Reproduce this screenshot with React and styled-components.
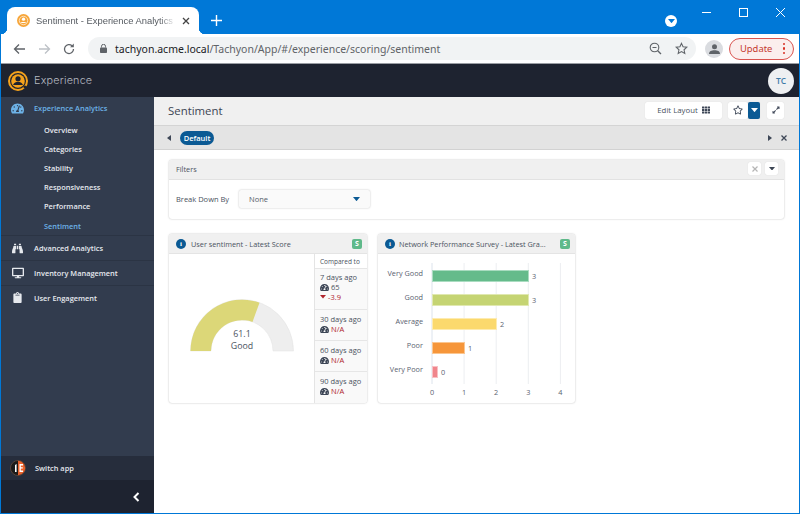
import React from 'react';
import styled, { createGlobalStyle } from 'styled-components';
import { FaTachometerAlt, FaBinoculars, FaDesktop, FaClipboard, FaTh, FaExpandAlt, FaRegStar } from 'react-icons/fa';

const Global = createGlobalStyle`
  html, body { margin: 0; padding: 0; background: #fff; }
  #root { width: 800px; height: 514px; overflow: hidden; }
  * { box-sizing: border-box; }
  body { font-family: "Open Sans", "Liberation Sans", sans-serif; }
`;

const Window = styled.div`
  width: 800px; height: 514px; display: flex; flex-direction: column;
  border: solid #0078d7; border-width: 0 1px 1px 1px; overflow: hidden; background: #fff;
`;
const TabStrip = styled.div`
  height: 34px; background: #0078d7; display: flex; align-items: flex-end; padding-left: 6px; flex: none;
`;
const Tab = styled.div`
  width: 192px; height: 27px; background: #fff; border-radius: 8px 8px 0 0; display: flex; align-items: center; position: relative;
  padding: 0 9px 0 10px; gap: 6px; font: 9.4px "Liberation Sans", "Open Sans", sans-serif; color: #555a60;
  &::before, &::after { content: ""; position: absolute; bottom: 0; width: 6px; height: 6px; }
  &::before { left: -6px; background: radial-gradient(circle at 0 0, transparent 6px, #fff 6.5px); }
  &::after { right: -6px; background: radial-gradient(circle at 100% 0, transparent 6px, #fff 6.5px); }
`;
const TabTitle = styled.span`
  flex: 1; white-space: nowrap; overflow: hidden;
  -webkit-mask-image: linear-gradient(to right, #000 88%, transparent);
`;
const NewTab = styled.div`
  margin: 0 0 2px 11px; width: 12px; height: 24px; display: flex; align-items: center; justify-content: center;
`;
const WinControls = styled.div`
  margin-left: auto; align-self: flex-start; display: flex; align-items: flex-start; height: 34px;
`;
const Ctl = styled.div`
  width: 37px; height: 24px; display: flex; align-items: center; justify-content: center;
`;
const ProfileDot = styled.div`
  margin: 15px 11px 0 0; width: 12px; height: 12px; border-radius: 50%; background: #fff; display: flex; align-items: center; justify-content: center;
`;
const Toolbar = styled.div`
  height: 29px; background: #fff; display: flex; align-items: center; flex: none; padding-left: 11px;
`;
const NavIcon = styled.div`
  width: 14px; height: 14px; margin-right: 11px; display: flex; align-items: center; justify-content: center;
`;
const Omnibox = styled.div`
  width: 608px; height: 23px; margin-left: 1px; background: #f1f3f4; border-radius: 12px; display: flex; align-items: center; padding: 0 7px 0 12px;
  font: 10.5px "Noto Sans", "Open Sans", sans-serif; color: #5f6368; white-space: nowrap;
`;
const Host = styled.span` color: #202124; `;
const Url = styled.span` margin-left: 8px; flex: 1; `;
const OmniIcon = styled.div` width: 14px; height: 14px; margin-left: 12px; display: flex; align-items: center; `;
const Avatar = styled.div`
  margin-left: 9px; width: 18px; height: 18px; border-radius: 50%; background: #dadce0; display: flex; align-items: center; justify-content: center;
`;
const Update = styled.div`
  margin-left: 6px; width: 65px; height: 22px; border-radius: 11px; border: 1px solid #d9534f; background: #fbeeed; color: #c5392f;
  display: flex; align-items: center; justify-content: space-between; padding: 0 8px 0 10px; font: 9.4px "Noto Sans", sans-serif;
`;
const Kebab = styled.span`
  display: flex; flex-direction: column; gap: 2px;
  i { display: block; width: 2.5px; height: 2.5px; background: #d93025; border-radius: 50%; }
`;
const AppHeader = styled.header`
  height: 34px; background: #1e2330; border-top: 1px solid #9a9da3; display: flex; align-items: center; padding: 0 5px 0 7px; flex: none;
`;
const Brand = styled.span`
  margin-left: 6px; font: 300 10.8px "Inter", "Open Sans", sans-serif; color: #b6bac2; letter-spacing: .2px;
`;
const User = styled.div`
  margin-left: auto; width: 26px; height: 26px; border-radius: 50%; background: #eef0f2; color: #3d7aa8; font: 600 8.5px "Open Sans", sans-serif;
  display: flex; align-items: center; justify-content: center;
`;
const Body = styled.div` flex: 1; display: flex; min-height: 0; `;
const Sidebar = styled.nav`
  width: 153px; background: #323c4e; display: flex; flex-direction: column; flex: none; color: #e6e9ee; font-size: 7.4px; font-weight: 600;
`;
const SideIcon = styled.span`
  width: 13px; display: flex; justify-content: center; flex: none; font-size: ${p => p.$size || 11}px;
`;
const Section = styled.div`
  height: ${p => p.$h || 25}px; display: flex; align-items: center; padding-left: 10px; gap: 10px; border-bottom: 1px solid ${p => p.$plain ? 'transparent' : '#2b3444'};
  color: ${p => p.$active ? '#6db3e8' : '#e6e9ee'}; flex: none;
`;
const SubList = styled.div` display: flex; flex-direction: column; border-bottom: 1px solid #2b3444; `;
const Sub = styled.div`
  height: 19.2px; display: flex; align-items: center; padding-left: 43px; color: ${p => p.$active ? '#6db3e8' : '#e6e9ee'};
`;
const Spacer = styled.div` flex: 1; `;
const Switch = styled.div`
  height: 24px; background: #262d3c; display: flex; align-items: center; padding-left: 9px; gap: 9px; flex: none;
`;
const Collapse = styled.div`
  height: 33px; background: #1e2330; display: flex; align-items: center; justify-content: flex-end; padding-right: 14px; flex: none;
`;
const Main = styled.main` flex: 1; display: flex; flex-direction: column; min-width: 0; background: #fff; `;
const TitleBar = styled.div`
  height: 29px; background: #f0f0f0; border-bottom: 1px solid #d4d4d4; display: flex; align-items: center; padding: 0 15px 2px 14px; flex: none;
`;
const Title = styled.h1` margin: 0 auto 0 0; font: 400 11.4px "Open Sans", sans-serif; color: #3c4553; `;
const ToolBtn = styled.div`
  height: 17px; width: ${p => p.$w || 17}px; background: ${p => p.$blue ? '#0b5a94' : '#fff'}; border-radius: 2px;
  margin-left: ${p => p.$ml || 0}px; display: flex; align-items: center; justify-content: center; gap: 4px;
  font-size: 7.8px; color: #4a5260; box-shadow: 0 0 1px rgba(0,0,0,.15);
  svg { color: #3e4757; }
`;
const TabBar = styled.div`
  height: 24px; background: #e4e4e4; border-bottom: 1px solid #d2d2d2; display: flex; align-items: center; padding: 0 12px 0 13px; flex: none;
`;
const Pill = styled.div`
  margin-left: 9px; height: 14px; width: 34px; border-radius: 7px; background: #0b5a94; color: #fff; font-size: 7.5px; font-weight: 600;
  display: flex; align-items: center; justify-content: center;
`;
const PushRight = styled.span` margin-left: auto; display: flex; `;
const CloseTab = styled.span` margin-left: 9px; display: flex; `;
const Content = styled.div` flex: 1; padding: 10px 15px 0 15px; display: flex; flex-direction: column; `;
const Panel = styled.section`
  height: 59px; border-radius: 3px; box-shadow: 0 0 2px rgba(0,0,0,.28); background: #fff; display: flex; flex-direction: column; flex: none;
`;
const PanelHead = styled.div`
  height: 20px; background: #f0f0f0; border-bottom: 1px solid #e2e2e2; border-radius: 3px 3px 0 0; display: flex; align-items: center;
  padding: 0 6px 2px 7px; font-size: 7.3px; color: #4a5260; gap: 4px;
`;
const HeadLabel = styled.span` flex: 1; `;
const MiniBtn = styled.div`
  width: 13px; height: 13px; background: #fff; border-radius: 2px; display: flex; align-items: center; justify-content: center; box-shadow: 0 0 1px rgba(0,0,0,.15);
`;
const FilterRow = styled.div` flex: 1; display: flex; align-items: center; padding: 0 7px 1px; font-size: 7.5px; color: #4a5260; `;
const Select = styled.div`
  margin-left: 10px; width: 131px; height: 18px; background: #fafafa; border-radius: 2px; box-shadow: 0 0 2px rgba(0,0,0,.25);
  display: flex; align-items: center; justify-content: space-between; padding: 0 10px; color: #555c68;
`;
const Cards = styled.div` display: flex; gap: 11px; margin-top: 15px; `;
const Card = styled.section`
  width: ${p => p.$w}px; height: 169px; border-radius: 3px; box-shadow: 0 0 2px rgba(0,0,0,.28); background: #fff; display: flex; flex-direction: column; overflow: hidden;
`;
const CardHead = styled.div`
  height: 20px; flex: none; background: #f0f0f0; border-bottom: 1px solid #e4e4e4; display: flex; align-items: center; padding: 0 5px 0 7px; gap: ${p => p.$gap || 5}px;
  font-size: 7.3px; color: #4a5260; white-space: nowrap;
`;
const Info = styled.div`
  width: 10px; height: 10px; border-radius: 50%; background: #0b5a94; color: #fff; font: 700 7px "Liberation Serif", serif;
  display: flex; align-items: center; justify-content: center; flex: none;
`;
const Badge = styled.div`
  margin-left: auto; width: 10px; height: 10px; border-radius: 2px; background: #5fb98a; color: #fff; font-size: 7px; font-weight: 700;
  display: flex; align-items: center; justify-content: center; flex: none;
`;
const CardBody = styled.div` flex: 1; display: flex; min-height: 0; `;
const GaugeArea = styled.div` flex: 1; display: flex; align-items: center; justify-content: center; padding-bottom: 12px; `;
const Compare = styled.aside`
  width: 53px; background: #f9f9f9; border-left: 1px solid #e4e4e4; display: flex; flex-direction: column; font-size: 7.5px; color: #4a5260;
`;
const CompareHead = styled.div` height: 15px; background: #fff; border-bottom: 1px solid #e6e6e6; display: flex; align-items: center; padding-left: 5px; font-size: 6.5px; flex: none; `;
const CompareRow = styled.div`
  height: ${p => p.$h}px; border-bottom: ${p => p.$last ? 0 : '1px solid #e6e6e6'}; padding: ${p => p.$pt || 4}px 0 0 5px; display: flex; flex-direction: column; line-height: 10px; flex: none;
`;
const Metric = styled.div`
  display: flex; align-items: center; gap: 2px; color: ${p => p.$red ? '#b0242c' : '#4a5260'};
  svg.gauge { color: #3e4757; font-size: 9px; }
`;
const LockIcon = styled.svg` margin-right: 8px; flex: none; `;

const Caret = ({ c = '#3d4654', w = 7 }) => <svg width={w} height={w * .6} viewBox="0 0 10 6"><path d="M0 0h10L5 6z" fill={c} /></svg>;

const Logo = () => (
  <svg width="20" height="20" viewBox="0 0 20 20">
    <circle cx="10" cy="10" r="9" fill="none" stroke="#f5a21c" strokeWidth="2" />
    <circle cx="10" cy="10" r="6.8" fill="#f5a21c" />
    <circle cx="10" cy="7.8" r="2.6" fill="#1e2330" />
    <path d="M5 14c1-2.500 3-3 5-3s4 .5 5 3z" fill="#1e2330" />
    <circle cx="17" cy="16" r="1.5" fill="#1e2330" />
  </svg>
);

function GaugeChart() {
  return (
    <svg width="108" height="62" viewBox="0 0 108 62">
      <path d="M2.500 59A51.500 51.500 0 0 1 105.500 59H85A31 31 0 0 0 23 59Z" fill="#eeeeee" stroke="#e2e2e2" strokeWidth=".5" />
      <path d="M2.500 59A51.500 51.500 0 0 1 71.500 10.700L64.500 30A31 31 0 0 0 23 59Z" fill="#dcd778" />
      <text x="54" y="44.500" textAnchor="middle" fontSize="8.800" fill="#4a5260" fontFamily="Open Sans">61.1</text>
      <text x="54" y="56.500" textAnchor="middle" fontSize="8.800" fill="#4a5260" fontFamily="Open Sans">Good</text>
    </svg>
  );
}

function BarChart() {
  const rows = [
    ['Very Good', 3, '#65bb8b', '#a9dcc0', 96], ['Good', 3, '#c5d473', '#e0e8b0', 96],
    ['Average', 2, '#fbd96d', '#fdebb0', 64], ['Poor', 1, '#f6963a', '#fbc690', 32], ['Very Poor', 0, '#f0858c', '#f8c0c4', 5],
  ];
  const x0 = 54;
  return (
    <svg width="197" height="149" viewBox="0 0 197 149" fontFamily="Open Sans" fontSize="7.3" fill="#5a6270">
      {[0, 1, 2, 3, 4].map(i => <line key={i} x1={x0 + i * 32.1} x2={x0 + i * 32.1} y1="9" y2="130" stroke={i ? '#eceef1' : '#dce3ec'} />)}
      {rows.map(([l, v, c, b, w], i) => {
        const y = 16 + i * 24;
        return (
          <g key={l}>
            <text x="45" y={y + 6} textAnchor="end">{l}</text>
            <rect x={x0 + .5} y={y + .5} width={w} height="11" fill={c} stroke={b} />
            <text x={x0 + w + 4} y={y + 9}>{v}</text>
          </g>
        );
      })}
      {[0, 1, 2, 3, 4].map(i => <text key={i} x={x0 + i * 32.1} y="141" textAnchor="middle">{i}</text>)}
    </svg>
  );
}

export default function App() {
  return (
    <Window>
      <Global />
      <TabStrip>
        <Tab>
          <svg width="13" height="13" viewBox="0 0 20 20"><circle cx="10" cy="10" r="10" fill="#f7a63a" /><circle cx="10" cy="10" r="6.5" fill="none" stroke="#fff" strokeWidth="1" /><circle cx="10" cy="8" r="2.5" fill="#fff" /><path d="M5 14c1-2.500 8-2.500 10 0z" fill="#fff" /></svg>
          <TabTitle>Sentiment - Experience Analytics</TabTitle>
          <svg width="8" height="8" viewBox="0 0 8 8"><path d="M1 1l6 6M7 1L1 7" stroke="#444" strokeWidth="1.3" /></svg>
        </Tab>
        <NewTab><svg width="11" height="11" viewBox="0 0 11 11"><path d="M5.500 0v11M0 5.500h11" stroke="#fff" strokeWidth="1.4" /></svg></NewTab>
        <WinControls>
          <ProfileDot><Caret c="#0078d7" w={7} /></ProfileDot>
          <Ctl><svg width="9" height="9" viewBox="0 0 9 9"><path d="M0 4.500h9" stroke="#fff" /></svg></Ctl>
          <Ctl><svg width="9" height="9" viewBox="0 0 9 9"><rect x=".5" y=".5" width="8" height="8" fill="none" stroke="#fff" /></svg></Ctl>
          <Ctl><svg width="9" height="9" viewBox="0 0 9 9"><path d="M0 0l9 9M9 0L0 9" stroke="#fff" /></svg></Ctl>
        </WinControls>
      </TabStrip>
      <Toolbar>
        <NavIcon><svg width="13" height="12" viewBox="0 0 13 12"><path d="M12 6H1.500M6 1.500L1.500 6 6 10.500" fill="none" stroke="#5f6368" strokeWidth="1.3" /></svg></NavIcon>
        <NavIcon><svg width="13" height="12" viewBox="0 0 13 12"><path d="M1 6h10.500M7 1.500L11.500 6 7 10.500" fill="none" stroke="#bdc1c6" strokeWidth="1.3" /></svg></NavIcon>
        <NavIcon><svg width="12" height="12" viewBox="0 0 12 12"><path d="M10.500 6A4.500 4.500 0 1 1 9 2.700" fill="none" stroke="#5f6368" strokeWidth="1.3" /><path d="M10.800 0.500V4.200H7.100z" fill="#5f6368" /></svg></NavIcon>
        <Omnibox>
          <LockIcon width="7" height="9" viewBox="0 0 7 9"><rect y="3.5" width="7" height="5.5" rx=".8" fill="#5f6368" /><path d="M1.500 3.500V2.300a2 2 0 0 1 4 0v1.200" fill="none" stroke="#5f6368" /></LockIcon>
          <Host>tachyon.acme.local</Host><span>/Tachyon/App/#/experience/scoring/sentiment</span><Url />
          <OmniIcon><svg width="13" height="13" viewBox="0 0 13 13"><circle cx="5.5" cy="5.5" r="4.3" fill="none" stroke="#5f6368" strokeWidth="1.1" /><path d="M8.700 8.700L12 12" stroke="#5f6368" strokeWidth="1.3" /><path d="M3.500 5.500h4" stroke="#5f6368" /></svg></OmniIcon>
          <OmniIcon><svg width="13" height="13" viewBox="0 0 24 24"><path d="M12 2.500l2.900 6.300 6.900.8-5.100 4.700 1.400 6.800-6.100-3.400-6.100 3.400 1.400-6.800-5.100-4.700 6.900-.8z" fill="none" stroke="#5f6368" strokeWidth="2" /></svg></OmniIcon>
        </Omnibox>
        <Avatar><svg width="11" height="10" viewBox="0 0 11 10"><circle cx="5.5" cy="2.8" r="2.5" fill="#5f6368" /><path d="M0 10c0-3 2.500-3.800 5.500-3.800S11 7 11 10z" fill="#5f6368" /></svg></Avatar>
        <Update>Update<Kebab><i /><i /><i /></Kebab></Update>
      </Toolbar>
      <AppHeader>
        <Logo />
        <Brand>Experience</Brand>
        <User>TC</User>
      </AppHeader>
      <Body>
        <Sidebar>
          <Section $h={23} $active $plain>
            <SideIcon $size={13}><FaTachometerAlt /></SideIcon>
            <span>Experience Analytics</span>
          </Section>
          <SubList>
            <Sub>Overview</Sub><Sub>Categories</Sub><Sub>Stability</Sub><Sub>Responsiveness</Sub><Sub>Performance</Sub><Sub $active>Sentiment</Sub>
          </SubList>
          <Section>
            <SideIcon><FaBinoculars /></SideIcon>
            <span>Advanced Analytics</span>
          </Section>
          <Section>
            <SideIcon $size={12}><FaDesktop /></SideIcon>
            <span>Inventory Management</span>
          </Section>
          <Section $h={24} $plain>
            <SideIcon><FaClipboard /></SideIcon>
            <span>User Engagement</span>
          </Section>
          <Spacer />
          <Switch>
            <svg width="16" height="16" viewBox="0 0 16 16"><circle cx="8" cy="8" r="7.5" fill="#1b1b1b" stroke="#7a5540" strokeWidth=".6" /><path d="M8 .8A7.200 7.200 0 0 1 8 15.200z" fill="#e9612c" /><path d="M9.500 4h3.500v1.400h-2.200v1.800h2v1.400h-2v1.900H13V12H9.500z" fill="#fff" /><path d="M5 5l1.600-1v8H5z" fill="#fff" /></svg>
            <span>Switch app</span>
          </Switch>
          <Collapse><svg width="7" height="10" viewBox="0 0 7 10"><path d="M5.500 1L1.500 5l4 4" fill="none" stroke="#fff" strokeWidth="2" /></svg></Collapse>
        </Sidebar>
        <Main>
          <TitleBar>
            <Title>Sentiment</Title>
            <ToolBtn $w={77}>Edit Layout <FaTh size={8} /></ToolBtn>
            <ToolBtn $ml={6} $w={20}><FaRegStar size={10} /></ToolBtn>
            <ToolBtn $blue $w={12}><Caret c="#fff" w={7} /></ToolBtn>
            <ToolBtn $ml={7}><FaExpandAlt size={8} /></ToolBtn>
          </TitleBar>
          <TabBar>
            <svg width="4" height="6" viewBox="0 0 4 6"><path d="M4 0v6L0 3z" fill="#3e4757" /></svg>
            <Pill>Default</Pill>
            <PushRight><svg width="4" height="6" viewBox="0 0 4 6"><path d="M0 0v6l4-3z" fill="#3e4757" /></svg></PushRight>
            <CloseTab><svg width="6" height="6" viewBox="0 0 6 6"><path d="M.5.500l5 5M5.500.500l-5 5" stroke="#3e4757" strokeWidth="1.3" /></svg></CloseTab>
          </TabBar>
          <Content>
            <Panel>
              <PanelHead>
                <HeadLabel>Filters</HeadLabel>
                <MiniBtn><svg width="6" height="6" viewBox="0 0 6 6"><path d="M.5.500l5 5M5.500.500l-5 5" stroke="#b5b5b5" strokeWidth="1.2" /></svg></MiniBtn>
                <MiniBtn><Caret w={6} /></MiniBtn>
              </PanelHead>
              <FilterRow>
                Break Down By
                <Select>None<Caret c="#0b5a94" w={7} /></Select>
              </FilterRow>
            </Panel>
            <Cards>
              <Card $w={198}>
                <CardHead>
                  <Info>i</Info>
                  <span>User sentiment - Latest Score</span>
                  <Badge>S</Badge>
                </CardHead>
                <CardBody>
                  <GaugeArea><GaugeChart /></GaugeArea>
                  <Compare>
                    <CompareHead>Compared to</CompareHead>
                    <CompareRow $h={41} $pt={3}>
                      7 days ago
                      <Metric><FaTachometerAlt className="gauge" /> 65</Metric>
                      <Metric $red><Caret c="#b0242c" w={6} /> -3.9</Metric>
                    </CompareRow>
                    <CompareRow $h={31}>30 days ago<Metric $red><FaTachometerAlt className="gauge" /> N/A</Metric></CompareRow>
                    <CompareRow $h={31}>60 days ago<Metric $red><FaTachometerAlt className="gauge" /> N/A</Metric></CompareRow>
                    <CompareRow $h={31} $last>90 days ago<Metric $red><FaTachometerAlt className="gauge" /> N/A</Metric></CompareRow>
                  </Compare>
                </CardBody>
              </Card>
              <Card $w={197}>
                <CardHead $gap={4}>
                  <Info>i</Info>
                  <span>Network Performance Survey - Latest Gra...</span>
                  <Badge>S</Badge>
                </CardHead>
                <BarChart />
              </Card>
            </Cards>
          </Content>
        </Main>
      </Body>
    </Window>
  );
}
